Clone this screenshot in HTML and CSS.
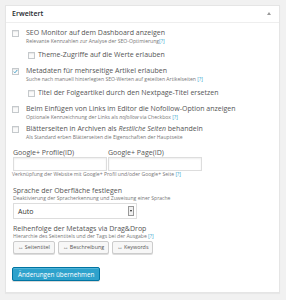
FILE: index.html
```html
<!DOCTYPE html>
<html lang="de">
<head>
<meta charset="utf-8">
<link rel="stylesheet" href="styles.css">
</head>
<body>
<div class="panel">
  <div class="panel-head">
    <span class="panel-title">Erweitert</span>
    <span class="toggle"></span>
  </div>
  <div class="panel-body">
    <div class="opt has-child">
      <span class="cb"></span>
      <div class="opt-text">
        <div class="title">SEO Monitor auf dem Dashboard anzeigen</div>
        <div class="sub">Relevante Kennzahlen zur Analyse der SEO-Optimierung<a class="help">[?]</a></div>
      </div>
    </div>
    <div class="child">
      <span class="cb"></span>
      <div class="title">Theme-Zugriffe auf die Werte erlauben</div>
    </div>
    <div class="opt has-child">
      <span class="cb checked"><svg viewBox="0 0 8 8" width="7" height="7"><path d="M1.3 4.2 L3.1 6 L6.8 1.6" fill="none" stroke="#1e8cbe" stroke-width="1.3"/></svg></span>
      <div class="opt-text">
        <div class="title">Metadaten für mehrseitige Artikel erlauben</div>
        <div class="sub">Suche nach manuell hinterlegten SEO-Werten auf geteilten Artikelseiten <a class="help">[?]</a></div>
      </div>
    </div>
    <div class="child">
      <span class="cb"></span>
      <div class="title">Titel der Folgeartikel durch den Nextpage-Titel ersetzen</div>
    </div>
    <div class="opt">
      <span class="cb"></span>
      <div class="opt-text">
        <div class="title">Beim Einfügen von Links im Editor die Nofollow-Option anzeigen</div>
        <div class="sub">Optionale Kennzeichnung der Links als <em>nofollow</em> via Checkbox <a class="help">[?]</a></div>
      </div>
    </div>
    <div class="opt">
      <span class="cb"></span>
      <div class="opt-text">
        <div class="title">Blätterseiten in Archiven als <em>Restliche Seiten</em> behandeln</div>
        <div class="sub">Als Standard erben Blätterseiten die Eigenschaften der Hauptseite</div>
      </div>
    </div>

    <div class="gplus">
      <div class="field">
        <div class="label">Google+ Profile(ID)</div>
        <div class="input"></div>
      </div>
      <div class="field">
        <div class="label">Google+ Page(ID)</div>
        <div class="input"></div>
      </div>
    </div>
    <div class="sub plain">Verknüpfung der Website mit Google+ Profil und/oder Google+ Seite <a class="help">[?]</a></div>

    <div class="section">
      <div class="label">Sprache der Oberfläche festlegen</div>
      <div class="sub plain">Deaktivierung der Spracherkennung und Zuweisung einer Sprache</div>
      <div class="select"><span class="select-value">Auto</span><span class="select-btn"><span class="tri"></span></span></div>
    </div>

    <div class="section order">
      <div class="label">Reihenfolge der Metatags via Drag&amp;Drop</div>
      <div class="sub plain">Hierarchie des Seitentitels und der Tags bei der Ausgabe <a class="help">[?]</a></div>
      <div class="tags">
        <span class="tag">↔ Seitentitel</span>
        <span class="tag">↔ Beschreibung</span>
        <span class="tag">↔ Keywords</span>
      </div>
    </div>

    <button class="primary">Änderungen übernehmen</button>
  </div>
</div>
</body>
</html>
```
FILE: styles.css
```css
html, body {
  margin: 0;
  padding: 0;
  background: #f1f1f1;
}
body {
  font-family: "Open Sans", "Noto Sans", sans-serif;
  color: #555;
  width: 286px;
  height: 300px;
  overflow: hidden;
}
.panel {
  margin: 5px 0 0 5px;
  width: 275px;
  box-sizing: border-box;
  background: #fff;
  border: 1px solid #e5e5e5;
  box-shadow: 0 1px 1px rgba(0,0,0,.04);
}
.panel-head {
  height: 16px;
  border-bottom: 1px solid #eee;
  display: flex;
  align-items: center;
  justify-content: space-between;
  padding: 0 8px 0 6px;
}
.panel-title {
  font-size: 7px;
  font-weight: 600;
  color: #23282d;
  line-height: 16px;
}
.toggle {
  width: 0;
  height: 0;
  border-left: 2px solid transparent;
  border-right: 2px solid transparent;
  border-bottom: 3px solid #999;
  margin-top: -1px;
}
.panel-body {
  padding: 4.5px 6px 11px 6px;
}
.title, .label {
  font-size: 7px;
  line-height: 9px;
  white-space: nowrap;
  color: #555;
}
.sub {
  font-size: 5.1px;
  line-height: 8px;
  color: #777;
  white-space: nowrap;
}
.help {
  color: #2ea2cc;
}
.cb {
  flex: none;
  width: 7px;
  height: 7px;
  box-sizing: border-box;
  border: 1px solid #c5c9cc;
  background: #fbfbfb;
  box-shadow: inset 0 1px 1px rgba(0,0,0,.08);
  margin-top: 2px;
  display: flex;
  align-items: center;
  justify-content: center;
}
.cb svg {
  display: block;
}
.opt {
  display: flex;
  gap: 7px;
  margin-bottom: 3px;
}
.opt.has-child {
  margin-bottom: 5px;
}
.child {
  display: flex;
  gap: 3px;
  padding-left: 16px;
  margin-bottom: 7px;
}
.gplus {
  display: flex;
  gap: 1px;
  margin-top: 7px;
  padding-left: 1px;
}
.field {
  width: 94px;
}
.input {
  height: 14px;
  box-sizing: border-box;
  border: 1px solid #ddd;
  box-shadow: inset 0 1px 2px rgba(0,0,0,.07);
  background: #fff;
}
.sub.plain {
  line-height: 7.5px;
}
.section {
  margin-top: 7.5px;
  padding-left: 1px;
}
.section .sub.plain {
  line-height: 7px;
}
.select {
  margin-top: 1.5px;
  width: 124px;
  height: 16px;
  box-sizing: border-box;
  border: 1px solid #ddd;
  display: flex;
  align-items: center;
  justify-content: space-between;
  padding: 0 2px 0 4px;
  background: #fff;
}
.select-value {
  font-size: 7px;
  color: #333;
}
.select-btn {
  width: 6px;
  height: 10px;
  box-sizing: border-box;
  border: 1px solid #999;
  background: #f0f0f0;
  display: flex;
  align-items: center;
  justify-content: center;
}
.tri {
  width: 0;
  height: 0;
  border-left: 1.5px solid transparent;
  border-right: 1.5px solid transparent;
  border-top: 2px solid #222;
}
.order {
  margin-top: 4.5px;
}
.tags {
  display: flex;
  gap: 3px;
  margin-top: 1.5px;
}
.tag {
  font-size: 5.4px;
  line-height: 11px;
  height: 13px;
  box-sizing: border-box;
  padding: 0 4px;
  border: 1px solid #ccc;
  border-radius: 2px;
  background: #f7f7f7;
  color: #555;
  box-shadow: 0 1px 0 #ddd;
  white-space: nowrap;
}
.primary {
  display: block;
  margin-top: 13px;
  height: 14px;
  padding: 0 5px;
  font-family: "Open Sans", "Noto Sans", sans-serif;
  font-size: 6.3px;
  color: #fff;
  background: #2ea2cc;
  border: 1px solid #0074a2;
  border-radius: 2px;
  box-shadow: inset 0 1px 0 rgba(120,200,230,.5), 0 1px 0 rgba(0,0,0,.15);
}
```
